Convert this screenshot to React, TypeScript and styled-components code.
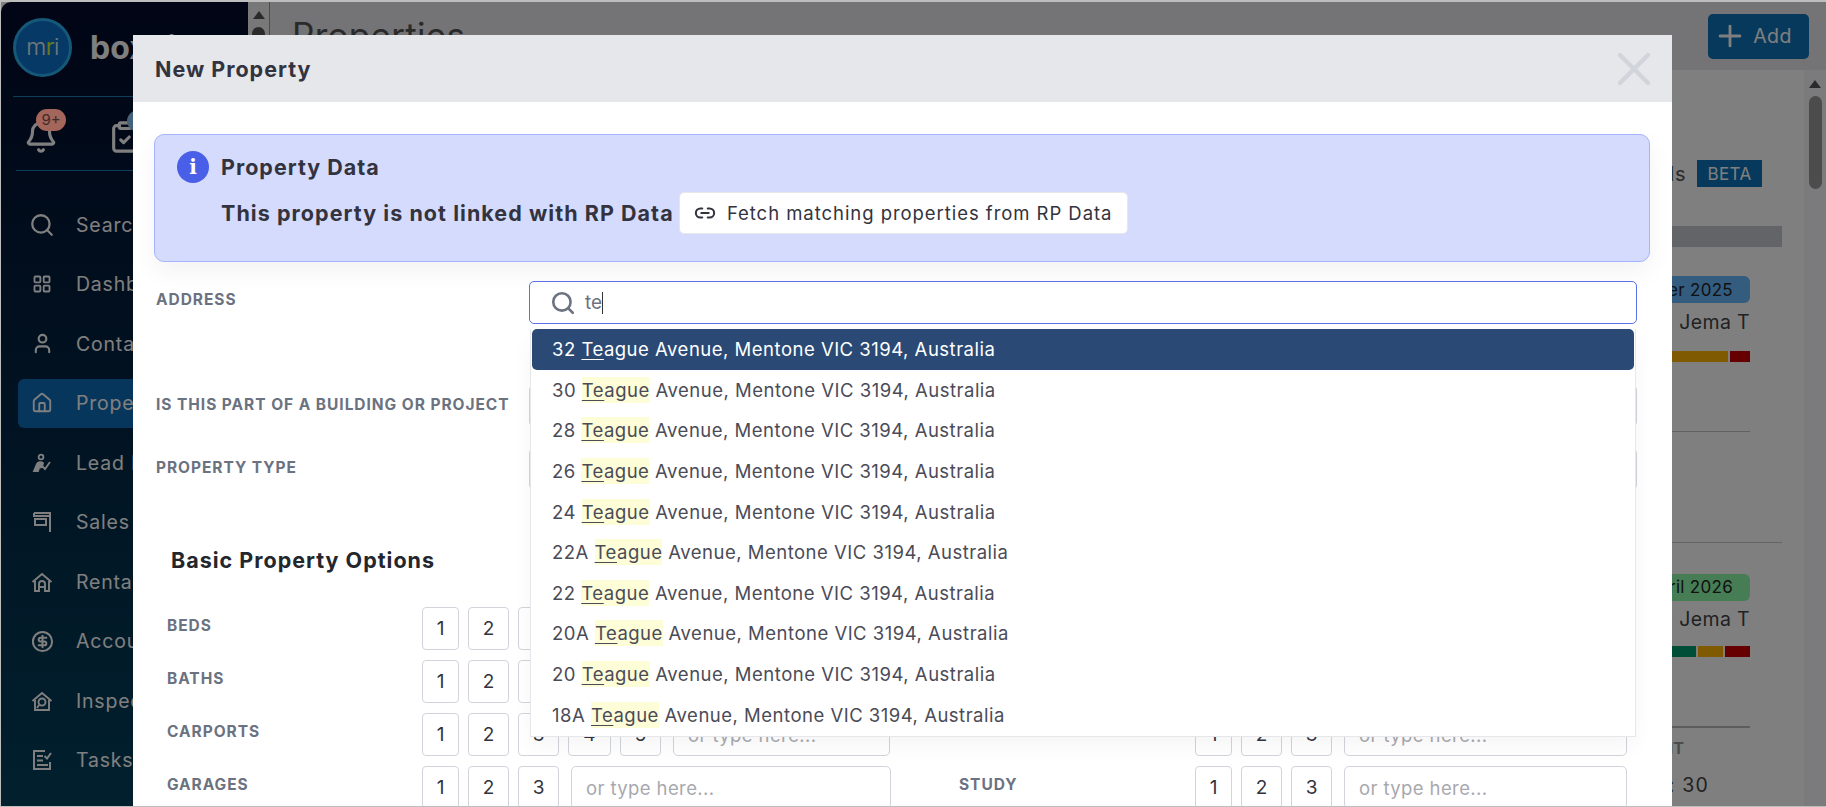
import React from "react";
import styled, { createGlobalStyle } from "styled-components";
import { Search, User, LayoutGrid, Bell, ClipboardCheck, Plus, X, Link2, CircleDollarSign, House } from "lucide-react";

const Global = createGlobalStyle`
  html, body { margin: 0; padding: 0; height: 100%; overflow: hidden; background: #fff; }
  #root { height: 100%; }
  * { box-sizing: border-box; }
  body { font-family: Inter, "Liberation Sans", sans-serif; }
`;

const Frame = styled.div`
  position: relative;
  width: 1826px;
  height: 807px;
  display: flex;
  overflow: hidden;
  background: #fff;
  border: solid #bdbdbd;
  border-width: 2px 0 1px 1px;
`;

const Sidebar = styled.aside`
  width: 247px;
  flex: none;
  display: flex;
  flex-direction: column;
  background: linear-gradient(180deg, #020a2a 0%, #02405c 100%);
  border-top-left-radius: 10px;
  color: #fff;
`;
const Brand = styled.div`
  height: 95px;
  margin: 0 15px;
  display: flex;
  align-items: center;
  gap: 18px;
  padding-bottom: 4px;
  margin-left: 12px;
  border-bottom: 1px solid #1a7ab0;
`;
const Logo = styled.div`
  width: 59px;
  height: 59px;
  border-radius: 50%;
  background: #0e72cc;
  border: 3px solid #2ab0f0;
  display: flex;
  align-items: center;
  justify-content: center;
  font-size: 23px;
  font-weight: 300;
  letter-spacing: -0.5px;
  color: #e8f2f2;
  & b { font-weight: 400; color: #c8f040; }
`;
const BrandName = styled.div`
  font-size: 32px;
  font-weight: 700;
  color: #fff;
`;
const Tools = styled.div`
  height: 74px;
  margin: 0 15px;
  display: flex;
  align-items: center;
  gap: 50px;
  padding-left: 8px;
  padding-top: 6px;
  border-bottom: 1px solid #1a7ab0;
`;
const ToolIcon = styled.div`
  position: relative;
  display: flex;
`;
const Badge = styled.span`
  position: absolute;
  z-index: 2;
  left: 12px;
  top: -11px;
  width: 30px;
  height: 22px;
  border-radius: 11px;
  background: #a4655a;
  color: #3c2b2b;
  font-size: 15px;
  display: flex;
  align-items: center;
  justify-content: center;
`;
const BlueDot = styled.span`
  position: absolute;
  left: 19px;
  top: -10px;
  width: 24px;
  height: 22px;
  border-radius: 50%;
  background: #8cc4f0;
`;
const Nav = styled.nav`
  display: flex;
  flex-direction: column;
  padding: 29px 0 0 17px;
`;
const NavItem = styled.div<{ $active?: boolean }>`
  height: 49.5px;
  margin-bottom: 10px;
  width: 230px;
  display: flex;
  align-items: center;
  gap: 21px;
  padding-left: 11px;
  border-radius: 6px;
  font-size: 19.5px;
  font-weight: 400;
  letter-spacing: 0.8px;
  color: #fff;
  background: ${(p) => (p.$active ? "#0e6cb8" : "transparent")};
`;
const IconBox = styled.span`
  width: 26px;
  flex: none;
  display: flex;
  justify-content: center;
`;

const MainArea = styled.main`
  flex: 1;
  min-width: 0;
  display: flex;
  flex-direction: column;
`;
const TopBar = styled.header`
  height: 68px;
  flex: none;
  display: flex;
  align-items: center;
  justify-content: space-between;
  background: #e8e8ec;
  padding-right: 17px;
`;
const TopLeft = styled.div`
  display: flex;
  align-items: center;
  height: 100%;
  gap: 22px;
`;
const MiniScroll = styled.div`
  width: 22px;
  height: 100%;
  background: #f0f0f0;
  border-right: 1px solid #999;
  display: flex;
  flex-direction: column;
  align-items: center;
  padding-top: 9px;
  gap: 8px;
`;
const UpArrow = styled.span`
  width: 0;
  height: 0;
  border-left: 6px solid transparent;
  border-right: 6px solid transparent;
  border-bottom: 8px solid #555;
`;
const MiniThumb = styled.span`
  width: 13px;
  height: 60px;
  border-radius: 7px;
  background: #555;
`;
const PageTitle = styled.h1`
  margin: -3px 0 0;
  font-size: 35px;
  font-weight: 400;
  letter-spacing: 0.3px;
  color: #555;
`;
const AddButton = styled.div`
  width: 101px;
  height: 45px;
  padding-right: 12px;
  border-radius: 5px;
  background: #0e72b8;
  color: #fff;
  display: flex;
  align-items: center;
  justify-content: center;
  gap: 6px;
  font-size: 19.5px;
  letter-spacing: 0.4px;
`;
const Content = styled.div`
  flex: 1;
  display: flex;
  min-height: 0;
  background: #fff;
`;
const Panel = styled.section`
  flex: 1;
  display: flex;
  flex-direction: column;
  align-items: stretch;
  padding-top: 90px;
  padding-right: 22px;
`;
const DetailsRow = styled.div`
  height: 27px;
  display: flex;
  justify-content: flex-end;
  align-items: center;
  gap: 11px;
  padding-right: 20px;
  font-size: 20px;
  letter-spacing: 0.5px;
  color: #555;
`;
const Beta = styled.span`
  width: 65px;
  height: 27px;
  background: #0e72b8;
  color: #fff;
  font-size: 17px;
  letter-spacing: 0.4px;
  display: flex;
  align-items: center;
  justify-content: center;
`;
const Band = styled.div`
  height: 22px;
  margin-top: 39px;
  background: #c6c8d0;
`;
const Card = styled.div<{ $top: number; $height: number; $line?: boolean }>`
  height: ${(p) => p.$height}px;
  padding: ${(p) => p.$top}px 32px 0 0;
  display: flex;
  flex-direction: column;
  align-items: flex-end;
  border-bottom: ${(p) => (p.$line ? "1px solid #c8c8c8" : "none")};
`;
const DateBadge = styled.div<{ $tone: string }>`
  height: 27px;
  width: 300px;
  padding-right: 17px;
  border-radius: 6px;
  background: ${(p) => p.$tone};
  color: #222;
  display: flex;
  align-items: center;
  justify-content: flex-end;
  font-size: 17px;
  letter-spacing: 0.3px;
`;
const Agent = styled.div<{ $gap: number }>`
  margin-top: ${(p) => p.$gap}px;
  font-size: 19.5px;
  letter-spacing: 0.35px;
  color: #444;
  white-space: nowrap;
`;
const Bars = styled.div<{ $gap: number }>`
  margin-top: ${(p) => p.$gap}px;
  height: 11px;
  display: flex;
  gap: 2px;
`;
const Bar = styled.span<{ $tone: string; $w: number }>`
  width: ${(p) => p.$w}px;
  background: ${(p) => p.$tone};
`;
const Rule = styled.div`
  width: 300px;
  height: 1px;
  background: #c4c4c4;
  margin-top: 69px;
`;
const RuleBold = styled(Rule)`
  height: 2px;
  background: #bbb;
  margin-top: 69px;
`;
const UnitLabel = styled.div`
  margin-top: 10px;
  margin-right: 66px;
  font-size: 16px;
  font-weight: 700;
  color: #999;
`;
const SizeText = styled.div`
  margin-top: 15px;
  margin-right: 41px;
  font-size: 19.5px;
  letter-spacing: 1.2px;
  color: #444;
`;
const ScrollTrack = styled.div`
  width: 22px;
  flex: none;
  background: #f6f7fb;
  display: flex;
  flex-direction: column;
  align-items: center;
  padding-top: 10px;
  gap: 8px;
`;
const PageThumb = styled.span`
  width: 13px;
  height: 93px;
  border-radius: 7px;
  background: #999;
`;

const Overlay = styled.div`
  position: absolute;
  inset: 0;
  z-index: 1;
  background: rgba(0, 0, 0, 0.5);
`;
const Modal = styled.div`
  position: absolute;
  z-index: 3;
  left: 132px;
  top: 33px;
  width: 1539px;
  height: 772px;
  overflow: hidden;
  background: #fff;
  display: flex;
  flex-direction: column;
`;
const ModalHeader = styled.div`
  height: 67px;
  flex: none;
  background: #e5e7eb;
  display: flex;
  align-items: center;
  justify-content: space-between;
  padding: 0 10px 0 22px;
  color: #d1d5db;
`;
const ModalTitle = styled.h2`
  margin: 0;
  font-size: 21.5px;
  font-weight: 700;
  letter-spacing: 1px;
  color: #333340;
`;
const ModalBody = styled.div`
  flex: 1;
  padding: 32px 22px 0 21px;
`;
const Alert = styled.div`
  height: 128px;
  border: 1px solid #a5b4fc;
  border-radius: 10px;
  background: #d5dbfd;
  box-shadow: 0 10px 25px rgba(0, 0, 0, 0.05);
  display: flex;
  gap: 12px;
  padding: 16px 22px;
`;
const InfoDot = styled.div`
  width: 32px;
  height: 32px;
  flex: none;
  border-radius: 50%;
  background: #4a5fe8;
  color: #fff;
  display: flex;
  align-items: center;
  justify-content: center;
  font-family: "DejaVu Serif", serif;
  font-weight: 700;
  font-size: 20px;
`;
const AlertText = styled.div`
  display: flex;
  flex-direction: column;
  gap: 9px;
`;
const AlertTitle = styled.div`
  font-size: 21.5px;
  font-weight: 700;
  line-height: 32px;
  letter-spacing: 1px;
  color: #333340;
`;
const AlertLine = styled.div`
  display: flex;
  align-items: center;
  gap: 5px;
  font-size: 21.5px;
  font-weight: 700;
  letter-spacing: 1.05px;
  color: #333340;
`;
const FetchButton = styled.div`
  width: 449px;
  height: 42px;
  border: 1px solid #e5e7eb;
  border-radius: 5px;
  background: #fff;
  display: flex;
  align-items: center;
  justify-content: center;
  gap: 11px;
  font-size: 18.5px;
  font-weight: 400;
  letter-spacing: 0.95px;
  color: #333340;
`;
const FieldRow = styled.div<{ $top: number; $height: number }>`
  margin-top: ${(p) => p.$top}px;
  height: ${(p) => p.$height}px;
  display: flex;
`;
const FieldLabel = styled.div<{ $pad: number }>`
  width: 375px;
  flex: none;
  padding: ${(p) => p.$pad}px 0 0 2px;
  font-size: 15.5px;
  font-weight: 700;
  letter-spacing: 0.95px;
  white-space: nowrap;
  color: #6b7280;
`;
const AddressWrap = styled.div`
  position: relative;
  width: 1108px;
`;
const AddressInput = styled.div`
  height: 43px;
  border: 1px solid #5a6fe8;
  border-radius: 5px;
  display: flex;
  align-items: center;
  gap: 9px;
  padding-left: 20px;
  font-size: 19px;
  color: #6b7280;
`;
const Caret = styled.span`
  display: inline-block;
  width: 1px;
  height: 22px;
  background: #333;
  vertical-align: middle;
`;
const Dropdown = styled.div`
  position: absolute;
  z-index: 5;
  left: 1px;
  top: 48px;
  width: 1106px;
  height: 408px;
  background: #fff;
  border: 1px solid #e5e7eb;
  border-top: none;
  padding: 0 1px;
  box-shadow: 0 10px 20px rgba(0, 0, 0, 0.04);
`;
const Option = styled.div<{ $active?: boolean }>`
  height: 40.6px;
  display: flex;
  align-items: center;
  white-space: pre;
  padding-left: 20px;
  font-size: 18.5px;
  letter-spacing: 0.5px;
  border-radius: ${(p) => (p.$active ? "5px" : "0")};
  background: ${(p) => (p.$active ? "#2a4a75" : "transparent")};
  color: ${(p) => (p.$active ? "#fff" : "#4b4b57")};
`;
const Mark = styled.span<{ $active?: boolean }>`
  background: ${(p) => (p.$active ? "transparent" : "#fdfdd8")};
  padding: 2px 0;
`;
const Under = styled.span`
  text-decoration: underline;
  text-underline-offset: 3px;
  text-decoration-thickness: 1px;
`;
const SelectStub = styled.div`
  width: 1108px;
  height: 42px;
  border: 1px solid #d1d5db;
  border-radius: 5px;
`;
const SectionTitle = styled.h3`
  margin: 55px 0 0 17px;
  height: 30px;
  line-height: 30px;
  font-size: 21.5px;
  font-weight: 700;
  letter-spacing: 1px;
  color: #24262d;
`;
const Options = styled.div`
  margin-top: 32px;
  padding-left: 13px;
  display: grid;
  grid-template-columns: 792px 1fr;
  row-gap: 10px;
`;
const OptionRow = styled.div`
  height: 43px;
  display: flex;
  gap: 9px;
`;
const RowLabel = styled.div<{ $w: number }>`
  width: ${(p) => p.$w}px;
  flex: none;
  padding-top: 9px;
  font-size: 15.5px;
  font-weight: 700;
  letter-spacing: 0.95px;
  color: #6b7280;
`;
const NumButton = styled.div<{ $w: number }>`
  width: ${(p) => p.$w}px;
  flex: none;
  height: 43px;
  border: 1px solid #d1d5db;
  border-radius: 4px;
  display: flex;
  align-items: center;
  justify-content: center;
  font-size: 19px;
  color: #333340;
`;
const TypeInput = styled.div<{ $w: number }>`
  width: ${(p) => p.$w}px;
  flex: none;
  height: 43px;
  margin-left: 3px;
  border: 1px solid #d1d5db;
  border-radius: 5px;
  padding-left: 14px;
  display: flex;
  align-items: center;
  font-size: 18.5px;
  letter-spacing: 0.4px;
  color: #a8a8ae;
`;

const LeadIcon = () => (
  <svg width="20" height="20" viewBox="0 0 20 20" fill="none" stroke="#fff" strokeWidth="1.8">
    <circle cx="9" cy="4" r="2.4" />
    <path d="M2 18l3-7c1-2 4-2.500 6-1l-1 4-3 1-1 3z" fill="#fff" />
    <path d="M10 13l3 3 5-7" />
  </svg>
);
const SalesIcon = () => (
  <svg width="20" height="22" viewBox="0 0 20 22" fill="none" stroke="#fff" strokeWidth="2">
    <path d="M2 2h16v19" />
    <path d="M2 2v3h16" />
    <rect x="3" y="8" width="11" height="6" />
  </svg>
);
const RentIcon = () => (
  <svg width="22" height="20" viewBox="0 0 22 20" fill="none" stroke="#fff" strokeWidth="1.9">
    <path d="M1.500 10L11 2l9.500 8" />
    <path d="M4 9v10h4v-7a3 3 0 0 1 6 0v7h4V9" />
    <path d="M8 15h6" />
  </svg>
);
const InspectIcon = () => (
  <svg width="22" height="20" viewBox="0 0 22 20" fill="none" stroke="#fff" strokeWidth="1.9">
    <path d="M1.500 10L11 2l9.500 8" />
    <path d="M4 9v10h14V9" />
    <circle cx="11" cy="11" r="3.500" />
    <path d="M8 14l-2 3" />
  </svg>
);
const TaskIcon = () => (
  <svg width="20" height="20" viewBox="0 0 20 20" fill="none" stroke="#fff" strokeWidth="2">
    <path d="M18 12v7H2V1h11" />
    <path d="M5 6h6M5 10.500h6M5 15h11" />
    <path d="M12.500 6l2.500 2.500L19 3" />
  </svg>
);

const navItems: { label: string; icon: React.ReactNode; active?: boolean }[] = [
  { label: "Search", icon: <Search size={32} color="#fff" strokeWidth={2.1} /> },
  { label: "Dashboard", icon: <LayoutGrid size={20} color="#fff" strokeWidth={2.2} /> },
  { label: "Contacts", icon: <User size={23} color="#fff" strokeWidth={2.2} /> },
  { label: "Properties", icon: <House size={22} color="#fff" strokeWidth={2} />, active: true },
  { label: "Lead Pipeline", icon: <LeadIcon /> },
  { label: "Sales", icon: <SalesIcon /> },
  { label: "Rentals", icon: <RentIcon /> },
  { label: "Accounts", icon: <CircleDollarSign size={23} color="#fff" strokeWidth={2.1} /> },
  { label: "Inspections", icon: <InspectIcon /> },
  { label: "Tasks", icon: <TaskIcon /> },
];

const addresses = ["32", "30", "28", "26", "24", "22A", "22", "20A", "20", "18A"];

const numberWidths = [37, 41, 41, 43, 41];

const Numbers = ({ count }: { count: number }) => (
  <>
    {numberWidths.slice(0, count).map((w, i) => (
      <NumButton key={i} $w={w}>
        {i + 1}
      </NumButton>
    ))}
  </>
);

export default function App() {
  return (
    <Frame>
      <Global />
      <Sidebar>
        <Brand>
          <Logo>
            <span>
              m<b>r</b>i
            </span>
          </Logo>
          <BrandName>boxdice</BrandName>
        </Brand>
        <Tools>
          <ToolIcon>
            <Bell size={34} color="#fff" strokeWidth={2.2} />
            <Badge>9+</Badge>
          </ToolIcon>
          <ToolIcon>
            <ClipboardCheck size={34} color="#fff" strokeWidth={2.2} />
            <BlueDot />
          </ToolIcon>
        </Tools>
        <Nav>
          {navItems.map((n) => (
            <NavItem key={n.label} $active={n.active}>
              <IconBox>{n.icon}</IconBox>
              {n.label}
            </NavItem>
          ))}
        </Nav>
      </Sidebar>
      <MainArea>
        <TopBar>
          <TopLeft>
            <MiniScroll>
              <UpArrow />
              <MiniThumb />
            </MiniScroll>
            <PageTitle>Properties</PageTitle>
          </TopLeft>
          <AddButton>
            <Plus size={34} color="#fff" strokeWidth={2} />
            Add
          </AddButton>
        </TopBar>
        <Content>
          <Panel>
            <DetailsRow>
              Details
              <Beta>BETA</Beta>
            </DetailsRow>
            <Band />
            <Card $top={29} $height={303} $line>
              <DateBadge $tone="#66b8ff">September 2025</DateBadge>
              <Agent $gap={7}>Agent: Jema T</Agent>
              <Bars $gap={17}>
                <Bar $tone="#ffb400" $w={120} />
                <Bar $tone="#cc0000" $w={20} />
              </Bars>
              <Rule />
            </Card>
            <Card $top={31} $height={270}>
              <DateBadge $tone="#8cfaaa">April 2026</DateBadge>
              <Agent $gap={6}>Agent: Jema T</Agent>
              <Bars $gap={15}>
                <Bar $tone="#009a70" $w={60} />
                <Bar $tone="#ffb400" $w={25} />
                <Bar $tone="#cc0000" $w={25} />
              </Bars>
              <RuleBold />
              <UnitLabel>UNIT</UnitLabel>
              <SizeText>Size: 30</SizeText>
            </Card>
          </Panel>
          <ScrollTrack>
            <UpArrow />
            <PageThumb />
          </ScrollTrack>
        </Content>
      </MainArea>
      <Overlay />
      <Modal>
        <ModalHeader>
          <ModalTitle>New Property</ModalTitle>
          <X size={56} strokeWidth={1.9} />
        </ModalHeader>
        <ModalBody>
          <Alert>
            <InfoDot>i</InfoDot>
            <AlertText>
              <AlertTitle>Property Data</AlertTitle>
              <AlertLine>
                This property is not linked with RP Data
                <FetchButton>
                  <Link2 size={22} color="#333340" strokeWidth={2.2} />
                  Fetch matching properties from RP Data
                </FetchButton>
              </AlertLine>
            </AlertText>
          </Alert>
          <FieldRow $top={19} $height={43}>
            <FieldLabel $pad={9}>ADDRESS</FieldLabel>
            <AddressWrap>
              <AddressInput>
                <Search size={26} color="#6b7280" strokeWidth={2.4} />
                <span>
                  te
                  <Caret />
                </span>
              </AddressInput>
              <Dropdown>
                {addresses.map((a, i) => (
                  <Option key={a} $active={i === 0}>
                    <span>
                      {a}{" "}
                      <Mark $active={i === 0}>
                        <Under>Te</Under>ague
                      </Mark>{" "}
                      Avenue, Mentone VIC 3194, Australia
                    </span>
                  </Option>
                ))}
              </Dropdown>
            </AddressWrap>
          </FieldRow>
          <FieldRow $top={61} $height={42}>
            <FieldLabel $pad={10}>IS THIS PART OF A BUILDING OR PROJECT</FieldLabel>
            <SelectStub />
          </FieldRow>
          <FieldRow $top={21} $height={42}>
            <FieldLabel $pad={10}>PROPERTY TYPE</FieldLabel>
            <SelectStub />
          </FieldRow>
          <SectionTitle>Basic Property Options</SectionTitle>
          <Options>
            <OptionRow>
              <RowLabel $w={246}>BEDS</RowLabel>
              <Numbers count={5} />
              <TypeInput $w={217}>or type here...</TypeInput>
            </OptionRow>
            <OptionRow />
            <OptionRow>
              <RowLabel $w={246}>BATHS</RowLabel>
              <Numbers count={5} />
              <TypeInput $w={217}>or type here...</TypeInput>
            </OptionRow>
            <OptionRow />
            <OptionRow>
              <RowLabel $w={246}>CARPORTS</RowLabel>
              <Numbers count={5} />
              <TypeInput $w={217}>or type here...</TypeInput>
            </OptionRow>
            <OptionRow>
              <RowLabel $w={227}>CAR SPACES</RowLabel>
              <Numbers count={3} />
              <TypeInput $w={283}>or type here...</TypeInput>
            </OptionRow>
            <OptionRow>
              <RowLabel $w={246}>GARAGES</RowLabel>
              <Numbers count={3} />
              <TypeInput $w={320}>or type here...</TypeInput>
            </OptionRow>
            <OptionRow>
              <RowLabel $w={227}>STUDY</RowLabel>
              <Numbers count={3} />
              <TypeInput $w={283}>or type here...</TypeInput>
            </OptionRow>
          </Options>
        </ModalBody>
      </Modal>
    </Frame>
  );
}
